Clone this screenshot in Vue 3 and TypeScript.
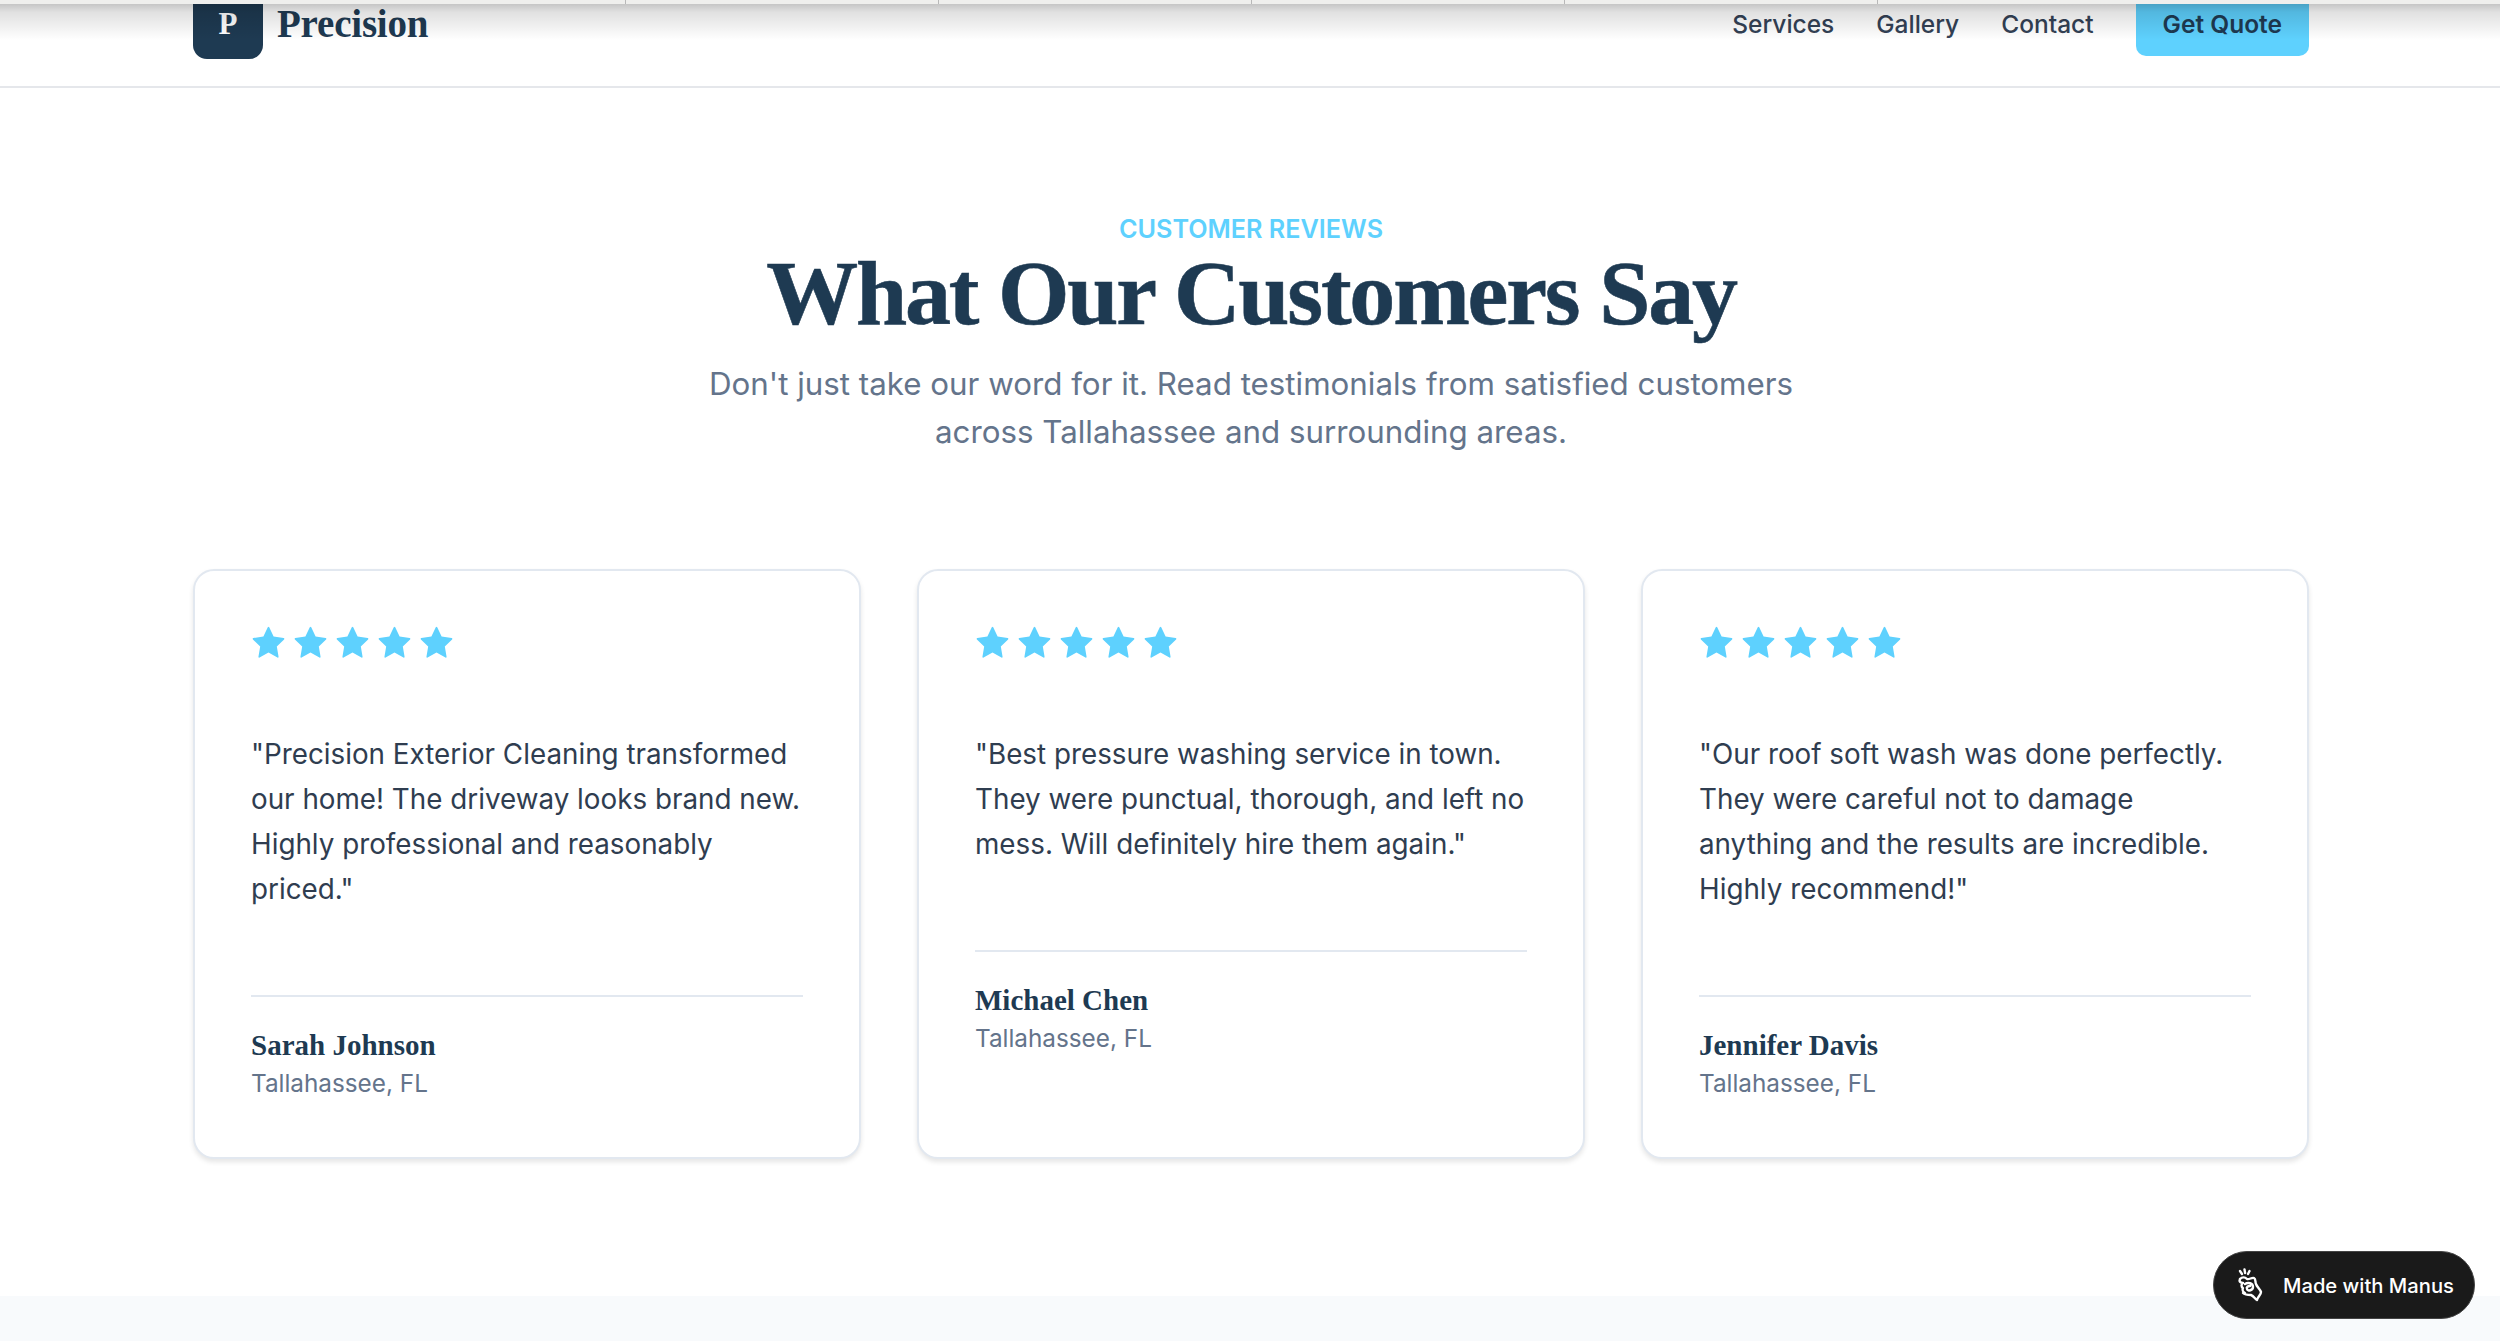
<script setup lang="ts">
type Review = { quote: string; name: string }

const reviews: Review[] = [
  {
    quote: '"Precision Exterior Cleaning transformed our home! The driveway looks brand new. Highly professional and reasonably priced."',
    name: 'Sarah Johnson',
  },
  {
    quote: '"Best pressure washing service in town. They were punctual, thorough, and left no mess. Will definitely hire them again."',
    name: 'Michael Chen',
  },
  {
    quote: '"Our roof soft wash was done perfectly. They were careful not to damage anything and the results are incredible. Highly recommend!"',
    name: 'Jennifer Davis',
  },
]
const links = ['Services', 'Gallery', 'Contact']
</script>

<template>
  <div class="page">
    <div class="top-shade">
      <div class="tabs">
        <span v-for="n in 5" :key="n" class="tab"></span>
      </div>
    </div>

    <header class="header">
      <div class="container header-row">
        <div class="brand">
          <div class="logo">P</div>
          <span class="brand-name">Precision</span>
        </div>
        <nav class="nav">
          <a v-for="link in links" :key="link" class="nav-link">{{ link }}</a>
          <a class="quote-btn">Get Quote</a>
        </nav>
      </div>
    </header>

    <section class="reviews">
      <div class="container">
        <div class="intro">
          <p class="eyebrow">CUSTOMER REVIEWS</p>
          <h2 class="title">What Our Customers Say</h2>
          <p class="lead">Don't just take our word for it. Read testimonials from satisfied customers across Tallahassee and surrounding areas.</p>
        </div>
        <div class="cards">
          <article v-for="r in reviews" :key="r.name" class="card">
            <div class="stars">
              <svg v-for="n in 5" :key="n" class="star" viewBox="0 0 24 24">
                <path d="M11.5 1.6a.6.6 0 0 1 1 0l3 6.3 6.9 1a.6.6 0 0 1 .3 1l-5 4.9 1.2 6.9a.6.6 0 0 1-.8.6L12 18.9l-6.1 3.4a.6.6 0 0 1-.8-.6l1.2-6.9-5-4.9a.6.6 0 0 1 .3-1l6.9-1z" />
              </svg>
            </div>
            <p class="quote">{{ r.quote }}</p>
            <div class="author">
              <p class="author-name">{{ r.name }}</p>
              <p class="author-place">Tallahassee, FL</p>
            </div>
          </article>
        </div>
      </div>
    </section>

    <div class="next-section"></div>

    <div class="badge">
      <svg class="badge-icon" viewBox="12 9 26 34" fill="none" stroke="#fff" stroke-width="2.4" stroke-linecap="round" stroke-linejoin="round">
        <path d="M15 12l2 3M19.5 10.5l.6 3.5M24.5 12l-1.5 3" />
        <path d="M15 20c2-2 5-2 7 0 2 1 5-2 7-1 2 1 1 4 2 6 1 3 4 5 5 8 0 3-3 4-4 8-2-1-3-4-6-5-3 0-6 0-8-2" />
        <path d="M15 20c-1 2 0 4 3 4-2 1-2 4 0 5-1 2 0 4 2 5" />
        <path d="M20 25c3-2 8-1 8 3 0 3-5 5-6 2-1-2 1-3 3-3" />
      </svg>
      <span>Made with Manus</span>
    </div>
  </div>
</template>

<style>
html,
body {
  margin: 0;
  background: #fff;
  overflow: hidden;
}
</style>

<style scoped>
.page {
  position: relative;
  height: 1341px;
  overflow: hidden;
  background: #fff;
  font-family: Inter, "Liberation Sans", sans-serif;
}
.top-shade {
  position: absolute;
  top: 0;
  left: 0;
  right: 0;
  height: 40px;
  z-index: 5;
  background: linear-gradient(to bottom, rgba(0, 0, 0, .24) 3px, rgba(0, 0, 0, .12) 12px, rgba(0, 0, 0, 0));
  pointer-events: none;
}
.tabs {
  display: grid;
  grid-template-columns: 626px 313px 313px 313px 313px 1fr;
  height: 4px;
  background: #efefed;
}
.tab {
  border-right: 1px solid #b8b8b8;
}
.container {
  width: 2116px;
  margin-left: 193px;
}
.header {
  margin-top: -39px;
  height: 125px;
  border-bottom: 2px solid #e5e7eb;
  display: flex;
  align-items: center;
}
.header-row {
  display: flex;
  align-items: center;
  justify-content: space-between;
}
.brand {
  display: flex;
  align-items: center;
  gap: 14px;
}
.logo {
  width: 70px;
  height: 70px;
  border-radius: 14px;
  background: #1e3a52;
  color: #fff;
  display: flex;
  align-items: center;
  justify-content: center;
  font: 700 31px "Liberation Serif", serif;
}
.brand-name {
  font: 700 39px "Liberation Serif", serif;
  letter-spacing: -.2px;
  color: #1e3a52;
}
.nav {
  display: flex;
  align-items: center;
  gap: 42px;
}
.nav-link {
  font-size: 24.5px;
  font-weight: 500;
  color: #334155;
}
.quote-btn {
  padding: 17px 27px;
  border-radius: 10px;
  background: #5ed1fe;
  color: #1e3a52;
  font-size: 24.5px;
  font-weight: 600;
}
.reviews {
  padding: 127px 0 140px;
}
.intro {
  text-align: center;
  margin-bottom: 113px;
}
.eyebrow {
  margin: 0;
  font-size: 25.2px;
  font-weight: 600;
  line-height: 28px;
  color: #5ed1fe;
}
.title {
  margin: 0 0 17px;
  font: 700 92px/100px "Liberation Serif", serif;
  letter-spacing: -2.2px;
  -webkit-text-stroke: .6px #1e3a52;
  color: #1e3a52;
}
.lead {
  width: 1120px;
  margin: 0 auto;
  font-size: 31.3px;
  line-height: 48px;
  color: #64748b;
}
.cards {
  display: grid;
  grid-template-columns: repeat(3, 1fr);
  gap: 56px;
}
.card {
  padding: 56px;
  border: 2px solid #e2e8f0;
  border-radius: 21px;
  box-shadow: 0 3px 5px rgba(0, 0, 0, .1);
  background: #fff;
}
.stars {
  display: flex;
  gap: 7px;
  margin: -2px 0 72px;
}
.star {
  width: 35px;
  height: 35px;
  fill: #5ed1fe;
}
.quote {
  margin: 0 0 83px;
  font-size: 27.8px;
  line-height: 45px;
  color: #2f3d50;
}
.author {
  border-top: 2px solid #e2e8f0;
  padding-top: 28px;
}
.author-name {
  margin: 0;
  font: 700 29px/41px "Liberation Serif", serif;
  color: #1e3a52;
}
.author-place {
  margin: 0;
  font-size: 24.3px;
  line-height: 35px;
  color: #64748b;
}
.next-section {
  position: absolute;
  left: 0;
  right: 0;
  top: 1296px;
  bottom: 0;
  background: #f8fafc;
}
.badge {
  position: absolute;
  left: 2213px;
  top: 1251px;
  width: 262px;
  height: 68px;
  box-sizing: border-box;
  padding-left: 23px;
  border-radius: 34px;
  background: #1a1a1a;
  border: 1px solid #444;
  color: #fff;
  display: flex;
  align-items: center;
  gap: 20px;
  font-size: 20.2px;
  font-weight: 500;
}
.badge-icon {
  width: 26px;
  height: 34px;
}
</style>
